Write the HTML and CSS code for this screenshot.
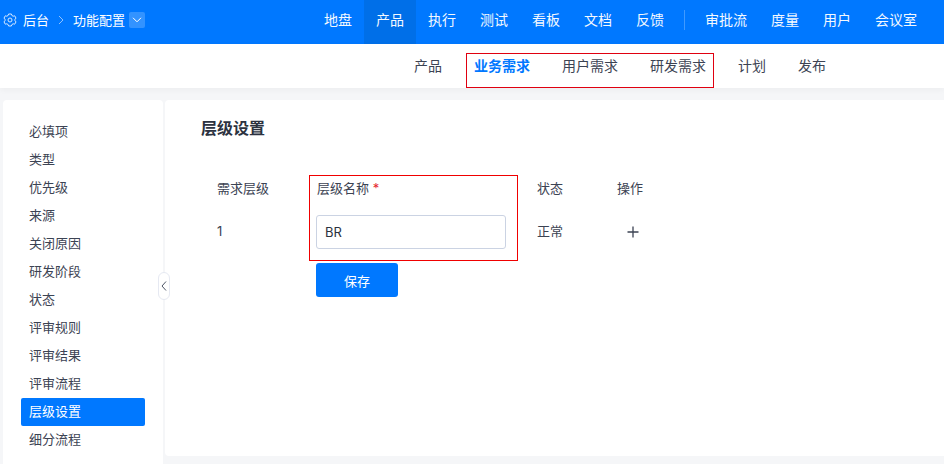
FILE: index.html
```html
<!DOCTYPE html>
<html lang="zh">
<head>
<meta charset="utf-8">
<title>层级设置</title>
<link rel="stylesheet" href="styles.css">
</head>
<body>
<header class="topbar">
  <div class="crumbs">
    <svg class="gear" width="14" height="14" viewBox="0 0 14 14" fill="none" stroke="#d5e8ff" stroke-width="1" stroke-linejoin="round"><path d="M5.600 1.500h2.800l.5 1.500 1.300.7 1.500-.4 1.300 2.300-1 1.100v1.600l1 1.100-1.300 2.300-1.500-.4-1.300.7-.5 1.500H5.600l-.5-1.500-1.300-.7-1.500.4L1 9.400l1-1.100V6.700L1 5.600l1.300-2.300 1.500.4L5.100 3z" transform="translate(0 -.5)"/><circle cx="7" cy="7" r="2"/></svg>
    <span class="crumb crumb-short">后台</span>
    <svg class="sep" width="6" height="10" viewBox="0 0 6 10" fill="none" stroke="#8fc2ff" stroke-width="1"><path d="M1 1l4 4-4 4"/></svg>
    <span class="crumb crumb-long">功能配置</span>
    <span class="drop"><svg width="10" height="6" viewBox="0 0 10 6" fill="none" stroke="#fff" stroke-width="1"><path d="M1 .8l4 4 4-4"/></svg></span>
  </div>
  <nav class="mainnav">
    <a class="nav-item">地盘</a>
    <a class="nav-item is-active">产品</a>
    <a class="nav-item">执行</a>
    <a class="nav-item">测试</a>
    <a class="nav-item">看板</a>
    <a class="nav-item">文档</a>
    <a class="nav-item">反馈</a>
    <span class="nav-divider"></span>
    <a class="nav-item">审批流</a>
    <a class="nav-item">度量</a>
    <a class="nav-item">用户</a>
    <a class="nav-item">会议室</a>
  </nav>
</header>
<div class="subbar">
  <a class="sub-item">产品</a>
  <div class="sub-group">
    <a class="sub-item is-current">业务需求</a>
    <a class="sub-item">用户需求</a>
    <a class="sub-item">研发需求</a>
  </div>
  <a class="sub-item">计划</a>
  <a class="sub-item sub-last">发布</a>
</div>
<div class="content">
  <aside class="sidebar">
    <a class="side-item">必填项</a>
    <a class="side-item">类型</a>
    <a class="side-item">优先级</a>
    <a class="side-item">来源</a>
    <a class="side-item">关闭原因</a>
    <a class="side-item">研发阶段</a>
    <a class="side-item">状态</a>
    <a class="side-item">评审规则</a>
    <a class="side-item">评审结果</a>
    <a class="side-item">评审流程</a>
    <a class="side-item is-selected">层级设置</a>
    <a class="side-item">细分流程</a>
    <span class="collapse"><svg width="6" height="10" viewBox="0 0 6 10" fill="none" stroke="#4d5566" stroke-width="1"><path d="M5 .5L1 5l4 4.500"/></svg></span>
  </aside>
  <main class="panel">
    <h1 class="title">层级设置</h1>
    <div class="form">
      <div class="col-level">
        <div class="head">需求层级</div>
        <div class="cell">1</div>
      </div>
      <div class="col-name">
        <div class="name-box">
          <div class="head">层级名称 <span class="req">*</span></div>
          <div class="cell"><input class="text-input" value="BR"></div>
        </div>
        <button class="save">保存</button>
      </div>
      <div class="col-status">
        <div class="head">状态</div>
        <div class="cell">正常</div>
      </div>
      <div class="col-action">
        <div class="head">操作</div>
        <div class="cell"><svg class="plus" width="12" height="12" viewBox="0 0 12 12" stroke="#3c4353" stroke-width="1.300"><path d="M6 .5v11M.5 6h11"/></svg></div>
      </div>
    </div>
  </main>
</div>
</body>
</html>
```
FILE: styles.css
```css
* { box-sizing: border-box; }
html, body { margin: 0; height: 464px; overflow: hidden; }
body {
  background: #f5f6f8;
  color: #3c4353;
  font: 14px/20px "Inter", "Noto Sans CJK SC", sans-serif;
  display: flex;
  flex-direction: column;
}
.topbar {
  height: 44px;
  background: #0078ff;
  color: #fff;
  display: flex;
  justify-content: space-between;
  padding: 0 15px 0 3px;
}
.crumbs { display: flex; align-items: center; padding-bottom: 4px; }
.gear { margin-right: 6px; }
.crumb { font-size: 13px; white-space: nowrap; }
.crumb-short { width: 26px; }
.crumb-long { width: 52px; }
.sep { margin: 0 9px; }
.drop {
  width: 16px; height: 16px; margin-left: 4px;
  background: rgba(255,255,255,.2);
  border-radius: 2px;
  display: flex; align-items: center; justify-content: center;
}
.mainnav { display: flex; }
.nav-item {
  padding: 0 12px;
  line-height: 39px;
  height: 44px;
  color: #f4f9ff;
}
.nav-item.is-active { background: #006fe8; }
.nav-divider {
  width: 1px; height: 20px; margin: 10px 8px 0;
  background: rgba(255,255,255,.25);
}
.subbar {
  height: 44px;
  background: #fff;
  display: flex;
  align-items: flex-start;
  padding-left: 414px;
  gap: 24px;
  box-shadow: 0 2px 6px rgba(0,0,0,.04);
}
.sub-item { line-height: 44px; height: 44px; color: #3c4353; white-space: nowrap; }
.sub-last { margin-left: 8px; }
.sub-group {
  height: 35px;
  margin-top: 9px;
  border: 1px solid #e00010;
  padding: 0 7px;
  display: flex;
  gap: 32px;
}
.sub-group .sub-item { line-height: 24px; height: 24px; }
.sub-item.is-current { color: #0078ff; font-weight: 700; }
.content {
  flex: 1;
  display: flex;
  gap: 2px;
  padding: 12px 0 8px 3px;
  min-height: 0;
}
.sidebar {
  position: relative;
  width: 160px;
  margin-bottom: -8px;
  background: #fff;
  padding: 18px 18px 0;
  border-radius: 4px 4px 0 0;
}
.side-item {
  display: block;
  height: 28px;
  line-height: 27px;
  padding-left: 8px;
  font-size: 13px;
  color: #3c4353;
  border-radius: 2px;
  width: 124px;
}
.side-item.is-selected { background: #0078ff; color: #fff; }
.collapse {
  position: absolute;
  left: 155px; top: 172px;
  width: 12px; height: 28px;
  background: #fff;
  border: 1px solid #e6e9f2;
  border-radius: 6px;
  display: flex; align-items: center; justify-content: center;
  z-index: 1;
}
.panel {
  flex: 1;
  background: #fff;
  padding: 18px 36px 0;
  border-radius: 4px 0 0 4px;
}
.title {
  margin: 0;
  font-size: 16px;
  line-height: 20px;
  font-weight: 700;
  color: #2c3240;
}
.form {
  display: flex;
  margin-top: 37px;
  font-size: 13px;
}
.col-level { width: 108px; padding-left: 16px; }
.col-name { width: 228px; }
.col-status { width: 80px; }
.col-action { width: 60px; }
.head { height: 28px; line-height: 27px; }
.cell { height: 42px; padding-top: 14px; line-height: 28px; }
.name-box {
  width: 209px;
  height: 86px;
  border: 1px solid #f00000;
  padding: 0 11px 0 6px;
  margin-bottom: 2px;
}
.name-box .head { margin-left: 1px; line-height: 25px; }
.name-box .cell { padding-top: 11px; height: auto; }
.req { color: #e5282f; }
.text-input {
  display: block;
  width: 190px;
  height: 34px;
  border: 1px solid #cbd3e3;
  border-radius: 3px;
  padding: 0 8px;
  font: 13px "Inter", "Noto Sans CJK SC", sans-serif;
  color: #2c3240;
  background: #fff;
}
.save {
  display: block;
  width: 82px;
  height: 34px;
  margin-left: 7px;
  border: 0;
  border-radius: 3px;
  background: #0078ff;
  color: #fff;
  font: 13px "Inter", "Noto Sans CJK SC", sans-serif;
}
.plus { margin-left: 10px; vertical-align: -2px; }
```
